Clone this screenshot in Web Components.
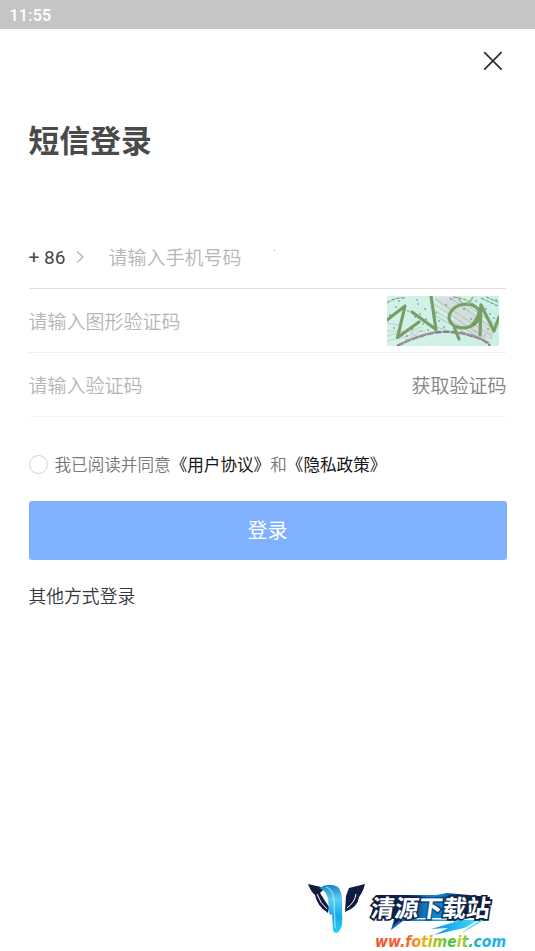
<!DOCTYPE html>
<html lang="zh-CN">
<head>
<meta charset="utf-8">
<title>短信登录</title>
<style>
html,body{margin:0;height:100%;background:#fff}
body{font-family:Roboto,"Noto Sans CJK SC",sans-serif;overflow:hidden}
</style>
</head>
<body>
<login-page></login-page>
<script>
const define = (name, html) => customElements.define(name, class extends HTMLElement {
  constructor() {
    super();
    this.attachShadow({mode: 'open'}).innerHTML = html;
  }
});

define('status-bar', `
<style>:host{display:flex;align-items:center;height:28.5px;box-sizing:border-box;padding:3px 0 0 9.5px;background:#c5c5c7;color:#fff;font:500 16px/24px Roboto,sans-serif;letter-spacing:.25px}</style>
<slot></slot>`);

define('close-button', `
<style>:host{display:flex;justify-content:flex-end;padding:22.5px 32px 0 0}svg{display:block}</style>
<svg width="20" height="20" viewBox="0 0 20 20" fill="none" stroke="#2e2e2e" stroke-width="1.7"><path d="M1.2 1.2 18.6 18.6M18.6 1.2 1.2 18.6"/></svg>`);

define('form-row', `
<style>:host{display:flex;align-items:center;height:64px;box-sizing:border-box;border-bottom:1px solid var(--line,#efefef);font-size:19px;line-height:28px;font-weight:350;color:#b5b5b5;white-space:nowrap}
.field{flex:1;padding-top:5px;margin-left:-.5px}</style>
<slot name="prefix"></slot><span class="field"><slot></slot></span><slot name="suffix"></slot>`);

define('country-code', `
<style>:host{display:flex;align-items:center;width:80px;padding-top:3px;color:#46484d;font-weight:400;font-size:19px;margin-left:-.5px;margin-right:.5px}
svg{display:block;margin:-2px 0 0 11px}</style>
<slot></slot><svg width="9" height="14" viewBox="0 0 9 14" fill="none" stroke="#bdbdbd" stroke-width="1.6"><path d="M1.2 1.5 7 7 1.2 12.5"/></svg>`);

define('captcha-image', `
<style>:host{display:block;width:112px;height:50px;margin:0 7px 0 0}svg{display:block}</style>
<svg width="112" height="50" viewBox="0 0 112 50" fill="none">
<defs><linearGradient id="bg"><stop stop-color="#d3f3e8"/><stop offset=".5" stop-color="#d0f0e6"/><stop offset="1" stop-color="#c9f1e5"/></linearGradient></defs>
<rect width="112" height="50" fill="url(#bg)"/>
<path d="M47 2 68 1 108 34 104 44 82 37Z" fill="#d5d4d6" opacity=".65"/>
<path d="M48 3 105 40M47 8 98 42M47 14 91 41M49 20 82 39M62 1 108 34M73 5 108 28M46 30 62 35" stroke="#aeb5b6" stroke-width=".8"/>
<path d="M0 35H38M0 40 35 31M0 45 28 38M12 49 34 35M0 27 16 30" stroke="#bccac7" stroke-width=".8"/>
<path d="M0 7Q8 1 18 2M66 1Q82 3 88 10M94 2 111 10M99 1 111 6" stroke="#7b9892" stroke-width="1.1" stroke-dasharray="4 1"/>
<path d="M10 50Q36 37 54 36T88 41Q99 44 103 50" stroke="#857d88" stroke-width="2.3" stroke-dasharray="7 1"/>
<path d="M12 49Q31 39 48 36M65 37Q84 36 102 47" stroke="#9f91a0" stroke-width="1.6"/>
<g stroke="#789f66" stroke-width="3.2" stroke-linecap="round" stroke-linejoin="round">
<path d="M0 24 18 10 10.5 41.5 32 26M25 16 49 33.5 44 0"/>
<ellipse cx="77.5" cy="20" rx="15.5" ry="11.7" transform="rotate(-12 77.5 20)"/><path d="M67.5 32 72 43"/>
<path d="M84 30Q91 24 94 10L93 39M94 9 107 35 112 21"/></g>
<path d="M71 1 74 6M86 1 81 9" stroke="#9bb889" stroke-width="1.7"/>
<g stroke="#4d6384" stroke-width="1.3" stroke-linecap="round"><path d="M3 19h.1M9 11h.1M12 5h.1M21 15h.1M30 4h.1M31 8h.1M28 21h.1M33 18h.1M38 13h.1M39 23h.1M36 28h.1M41 34h.1M49 17h.1M52 25h.1M57 31h.1M59 9h.1M64 3h.1M77 13h.1M84 23h.1M87 28h.1M89 5h.1M99 13h.1M101 33h.1M103 18h.1M107 22h.1M109 4h.1M7 32h.1M20 40h.1M25 33h.1"/></g>
<g stroke="#bd8ba2" stroke-width="1.3" stroke-linecap="round"><path d="M15 37h.1M19 43h.1M25 37h.1M29 40h.1M34 35h.1M22 33h.1M44 37h.1M94 34h.1M98 39h.1M104 42h.1M88 35h.1"/></g>
</svg>`);

define('code-button', `
<style>:host{display:block;padding-top:5px;color:#828282;margin-right:-.5px}</style><slot></slot>`);

define('agree-line', `
<style>:host{display:flex;align-items:center;height:24px;margin-top:35.5px;font-size:16.6px;line-height:24px;font-weight:350;color:#777;white-space:nowrap}
i{box-sizing:border-box;width:19px;height:19px;border:1px solid #d4d4d4;border-radius:50%;margin:0 7px 0 -.5px}
span{padding-top:2px}
::slotted(span){color:#151515;font-weight:400}</style><i></i><span><slot></slot></span>`);

define('primary-button', `
<style>:host{display:flex;align-items:center;justify-content:center;height:59.5px;box-sizing:border-box;padding-top:2px;margin:24px -.5px 0;background:#80b1ff;border-radius:3px;color:#fff;font-size:20px;line-height:30px}</style><slot></slot>`);

define('site-mark', `
<style>:host{position:absolute;left:300px;top:875px;width:220px;height:76px}svg{display:block}</style>
<svg width="220" height="76" viewBox="0 0 220 76">
<defs>
<linearGradient id="water" x2="0" y2="1"><stop stop-color="#1683c8"/><stop offset=".3" stop-color="#5fd0f2"/><stop offset=".65" stop-color="#19a6e9"/><stop offset="1" stop-color="#22d5f5"/></linearGradient>
<linearGradient id="plate" gradientUnits="userSpaceOnUse" x1="68" x2="192" y1="0" y2="0"><stop stop-color="#101a38"/><stop offset=".3" stop-color="#0c2350"/><stop offset=".48" stop-color="#1583c8"/><stop offset=".6" stop-color="#1583c8"/><stop offset=".74" stop-color="#0c2752"/><stop offset="1" stop-color="#101a38"/></linearGradient>
<linearGradient id="edge" gradientUnits="userSpaceOnUse" x1="0" x2="120" y1="0" y2="0"><stop stop-color="#101a38"/><stop offset=".35" stop-color="#0c2350"/><stop offset=".5" stop-color="#0f5f9f"/><stop offset=".65" stop-color="#0c2752"/><stop offset="1" stop-color="#101a38"/></linearGradient>
<linearGradient id="swoosh"><stop stop-color="#1264b0"/><stop offset=".6" stop-color="#1ca8eb"/><stop offset="1" stop-color="#4ce6fa"/></linearGradient>
<linearGradient id="rainbow" gradientUnits="userSpaceOnUse" x1="75" x2="206" y1="0" y2="0"><stop stop-color="#f2502b"/><stop offset=".25" stop-color="#f6662a"/><stop offset=".36" stop-color="#f4b019"/><stop offset=".5" stop-color="#8bc928"/><stop offset=".58" stop-color="#37bf55"/><stop offset=".66" stop-color="#d6cf20"/><stop offset=".72" stop-color="#34ba82"/><stop offset=".8" stop-color="#21aee0"/><stop offset="1" stop-color="#20b3ef"/></linearGradient>
</defs>
<path d="M8 9 25 13 20 18 29 32 28 38Q17 31 15 20Q11 17 8 9ZM65 9 49 13 46 21 45 37Q58 32 59 22Q63 17 65 9Z" fill="#111b3f"/>
<path d="M17 19Q20 28 27 34M56 19Q55 27 47 33" stroke="#fff" stroke-width="1" fill="none"/>
<path d="M19 13Q29 7 38 12Q42 16 42 26V39Q43 48 41 53Q37 61 33 56L32 39Q29 42 29 35L28 24Q26 15 19 13Z" fill="url(#water)"/>
<path d="M26 12Q33 14 34 25L35 53" stroke="#b3f3ff" stroke-width="1.3" fill="none" opacity=".7"/>
<path d="M94 44 91 55 103 46H158L131 54 148 53 134 60 168 52 162 58 184 45Z" fill="url(#swoosh)"/>
<path d="M158 57 176 46H179L163 57Z" fill="#fff" opacity=".8"/>
<path d="M77 20H136L147 18 190 22 187 43H102L93 51 95 44 70 43Z" fill="url(#plate)"/>
<text transform="translate(70 41.5) skewX(-8)" font-family="Noto Sans CJK SC,sans-serif" font-weight="700" font-size="24" textLength="119" lengthAdjust="spacingAndGlyphs" fill="#fff" stroke="url(#edge)" stroke-width="3.4" stroke-linejoin="miter" paint-order="stroke">清源下载站</text>
<text x="75" y="72" font-family="DejaVu Sans,sans-serif" font-weight="700" font-style="italic" font-size="15.8" textLength="131" lengthAdjust="spacingAndGlyphs" fill="url(#rainbow)">ww.fotimeit.com</text>
</svg>`);

define('login-page', `
<style>:host{display:block;position:relative;width:535px;height:951px;background:#fff;overflow:hidden}
main{padding:0 29px}
h1{margin:48px 0 0 -.5px;font-size:30.8px;line-height:46px;font-weight:700;color:#4a4a4a}
.form{margin-top:60px}
.other{margin-top:23px;margin-left:-.5px;font-size:17.8px;line-height:28px;font-weight:350;color:#35383d}
.dot{display:inline-block;width:1px;height:1px;margin-left:32px;background:#999;vertical-align:14px}
</style>
<status-bar>11:55</status-bar>
<close-button></close-button>
<main>
<h1>短信登录</h1>
<div class="form">
<form-row style="--line:#dfdfdf"><country-code slot="prefix">+ 86</country-code>请输入手机号码<i class="dot"></i></form-row>
<form-row>请输入图形验证码<captcha-image slot="suffix"></captcha-image></form-row>
<form-row style="--line:#f5f5f5">请输入验证码<code-button slot="suffix">获取验证码</code-button></form-row>
</div>
<agree-line>我已阅读并同意<span>《用户协议》</span>和<span>《隐私政策》</span></agree-line>
<primary-button>登录</primary-button>
<div class="other">其他方式登录</div>
</main>
<site-mark></site-mark>`);
</script>
</body>
</html>
